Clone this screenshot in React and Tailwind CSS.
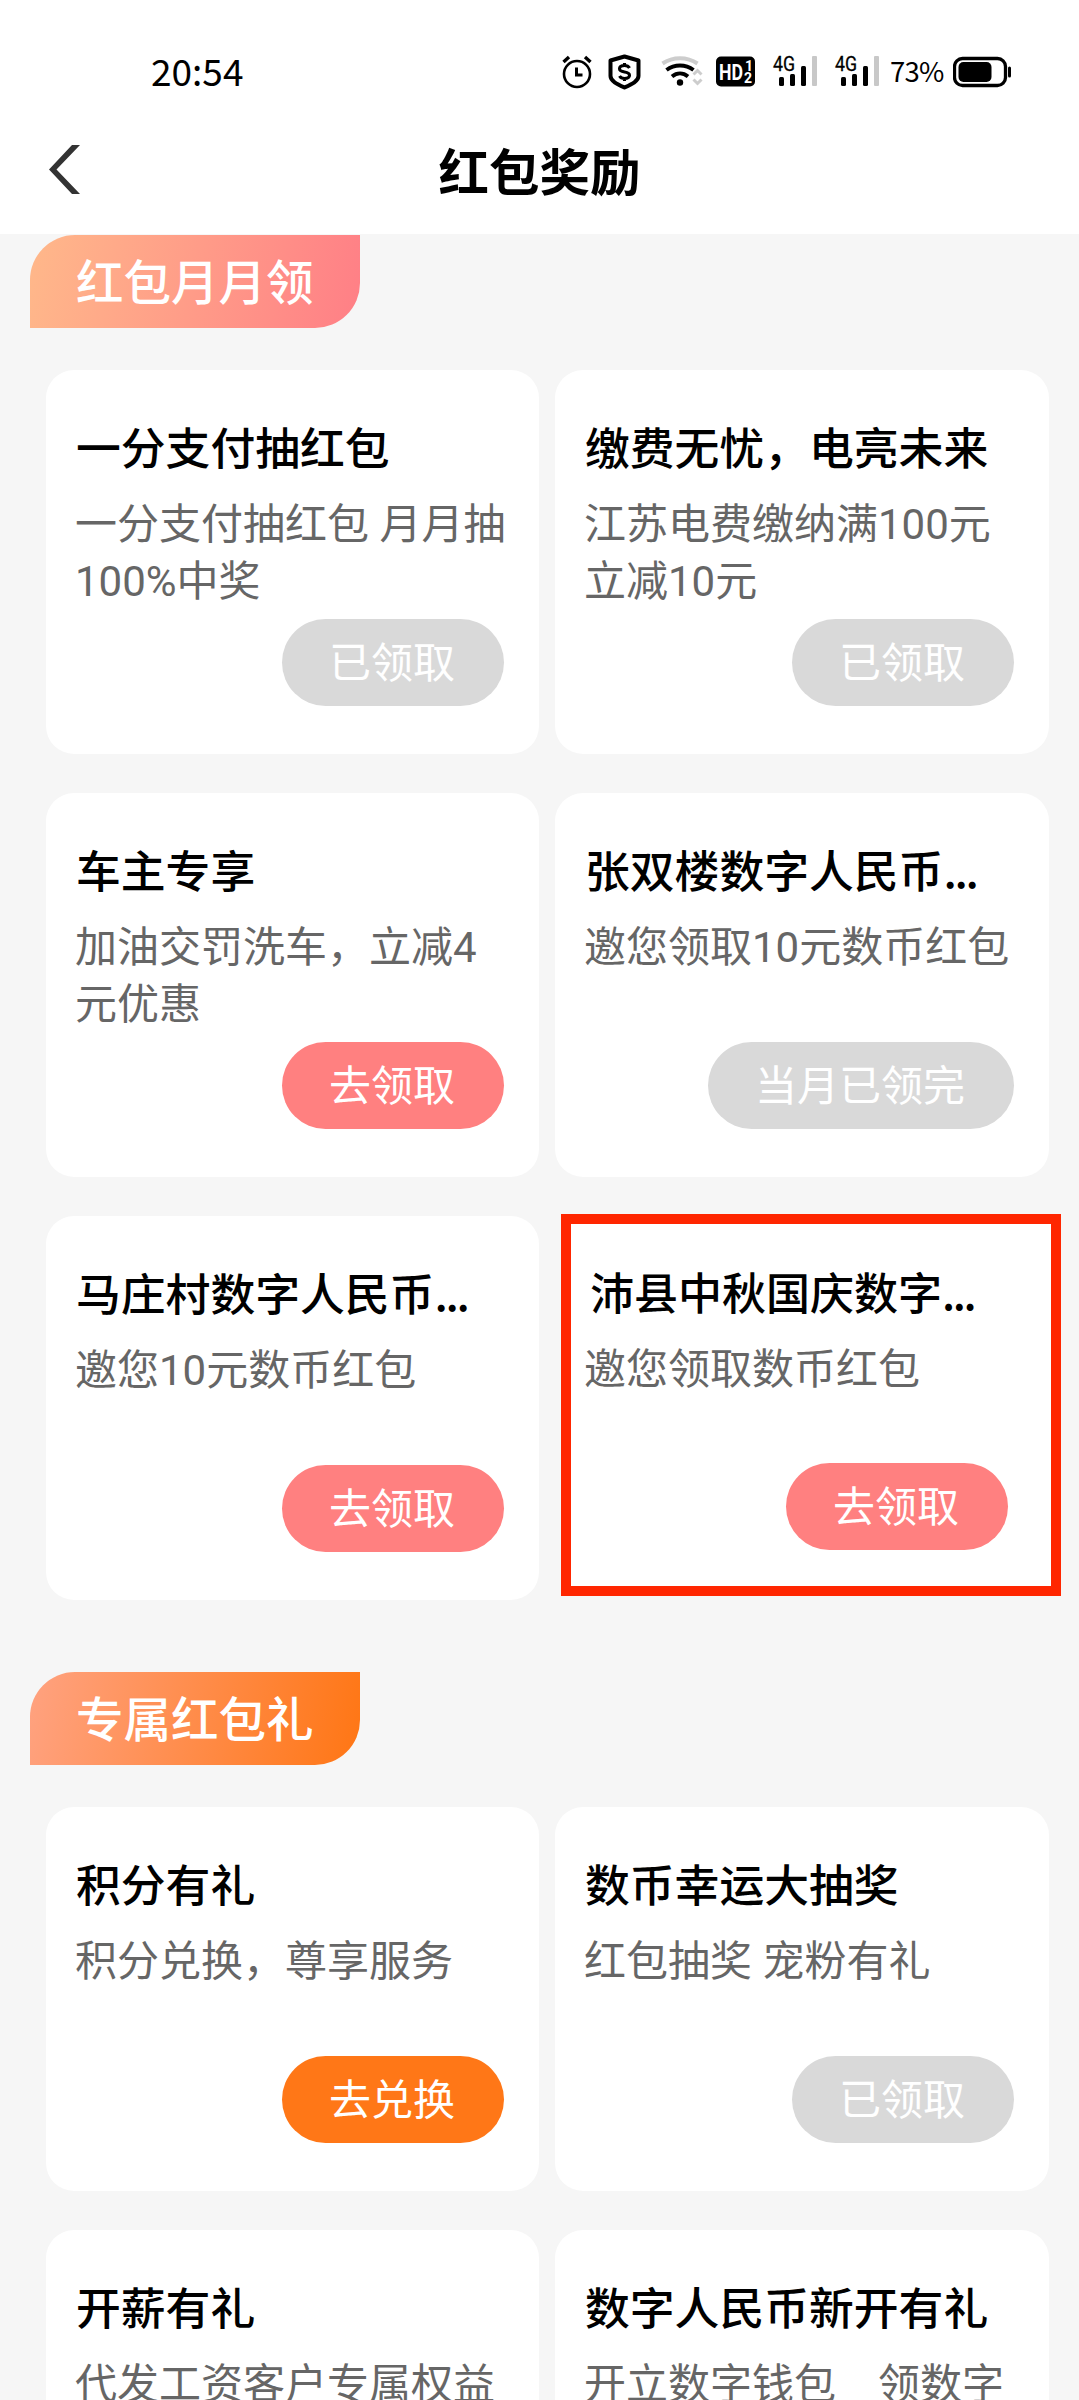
import { Fragment } from "react";
import clsx from "clsx";

const monthly = [
  { title: "一分支付抽红包", desc: ["一分支付抽红包 月月抽", "100%中奖"], btn: "已领取", type: "done" },
  { title: "缴费无忧，电亮未来", desc: ["江苏电费缴纳满100元", "立减10元"], btn: "已领取", type: "done" },
  { title: "车主专享", desc: ["加油交罚洗车，立减4", "元优惠"], btn: "去领取", type: "pink" },
  { title: "张双楼数字人民币", more: true, desc: ["邀您领取10元数币红包"], btn: "当月已领完", type: "done" },
  { title: "马庄村数字人民币", more: true, desc: ["邀您10元数币红包"], btn: "去领取", type: "pink" },
  { title: "沛县中秋国庆数字", more: true, desc: ["邀您领取数币红包"], btn: "去领取", type: "pink", marked: true },
];

const exclusive = [
  { title: "积分有礼", desc: ["积分兑换，尊享服务"], btn: "去兑换", type: "orange" },
  { title: "数币幸运大抽奖", desc: ["红包抽奖 宠粉有礼"], btn: "已领取", type: "done" },
  { title: "开薪有礼", desc: ["代发工资客户专属权益"], btn: "去领取", type: "orange" },
  { title: "数字人民币新开有礼", desc: ["开立数字钱包　领数字"], btn: "去领取", type: "orange" },
];

const btnStyles = {
  done: "bg-[#d9d9d9]",
  pink: "bg-[#ff8080]",
  orange: "bg-[#ff7717]",
};

function Signal() {
  return (
    <svg className="overflow-visible" width="46" height="34" viewBox="0 0 46 34">
      <text x="0" y="15.5" fontSize="20" textLength="22" lengthAdjust="spacingAndGlyphs" fontFamily="Roboto" stroke="#000" strokeWidth="0.3">4G</text>
      <rect x="6" y="22" width="5" height="9" rx="1.5" />
      <rect x="17" y="19" width="5" height="12" rx="1.5" />
      <rect x="28" y="11" width="5" height="20" rx="1.5" />
      <rect x="39" y="1" width="5" height="30" rx="1" fill="#c8c8c8" />
    </svg>
  );
}

function StatusBar() {
  return (
    <div className="flex h-[110px] items-center pl-[151px] pt-[36px] pb-[2px] text-black">
      <span className="w-[410px] pb-[4px] text-[37px] leading-[68px]">20:54</span>
      {/* alarm */}
      <svg width="31" height="36" viewBox="0 0 31 36" fill="none" stroke="#000" strokeWidth="2.6">
        <circle cx="16" cy="20" r="13" />
        <path d="M15.5 13.500v7.500h6" strokeWidth="3" />
        <path d="M2.500 8l5.500-5M29.500 8l-5.500-5" strokeWidth="3.400" />
      </svg>
      {/* shield */}
      <svg className="ml-[15px]" width="36" height="36" viewBox="0 0 36 36" fill="none" stroke="#000">
        <path d="M17.500 2.500l14 4v15.500c0 5-6.500 8-14 11.500C10 30 3.500 27 3.500 22V6.500z" strokeWidth="4" strokeLinejoin="round" />
        <path d="M22.500 14c-1-2-3-2.500-5-2.500-3 0-5 1.200-5 3.300s2 2.700 5 3.200 5 1.200 5 3.300-2 3.200-5 3.200c-2.500 0-4-.8-5-2.500M17.500 9v2.500M17.500 24.500v2.500" strokeWidth="3.100" />
      </svg>
      {/* wifi */}
      <svg className="ml-[18px]" width="42" height="36" viewBox="0 0 42 36" fill="none" stroke="#000" strokeWidth="4">
        <path d="M1.500 9.500C12 2.500 26 2.500 36.500 9.500" stroke="#cdcdcd" />
        <path d="M5.500 16c8-6 19-6 27 0M11 22.500c5-4 11-4 16 0" />
        <circle cx="19" cy="28.500" r="3.200" fill="#000" stroke="none" />
        <path d="M32.500 20.500l4-4 4 4M32.500 25.500l4 4 4-4" stroke="#cdcdcd" strokeWidth="3" />
      </svg>
      {/* HD */}
      <svg className="ml-[13px]" width="40" height="32" viewBox="0 0 40 32">
        <rect x="0" y="0.500" width="39" height="30" rx="5" />
        <g fill="#fff" fontFamily="Roboto" fontWeight="700">
          <text x="3" y="23.500" fontSize="22" textLength="24" lengthAdjust="spacingAndGlyphs">HD</text>
          <text x="29" y="14.500" fontSize="14">1</text>
          <text x="28" y="26.500" fontSize="14">2</text>
        </g>
      </svg>
      <div className="ml-[17px] flex gap-[16px]">
        <Signal />
        <Signal />
      </div>
      <span className="ml-[9px] w-[63px] pb-[3px] text-[27.500px] tracking-[-0.800px]">73%</span>
      <svg width="60" height="32" viewBox="0 0 60 32">
        <rect x="1.500" y="2.500" width="51" height="27" rx="8" fill="none" stroke="#000" strokeWidth="3.300" />
        <rect x="5.500" y="6" width="33" height="20" rx="5" />
        <rect x="55" y="10.500" width="3" height="11" rx="1.500" />
      </svg>
    </div>
  );
}

function Card({ item }) {
  return (
    <div
      className={clsx(
        "flex flex-col bg-white",
        item.marked
          ? "mt-[-2px] mr-[-12px] ml-[6px] h-[382px] w-[500px] border-[10px] border-[#ff2600] pt-[34px] pr-[43px] pl-[14px]"
          : "h-[384px] rounded-[28px] pt-[43px] pr-[35px] pl-[30px]"
      )}
    >
      <h3
        className={clsx(
          "h-[66px] whitespace-nowrap font-medium leading-[66px] text-black",
          item.marked ? "pl-[5px] text-[44px]" : "text-[44.800px]"
        )}
      >
        {item.title}
        {item.more && <span className="tracking-[-2.300px]">...</span>}
      </h3>
      <p
        className="-ml-px mt-[17px] h-[114px] whitespace-nowrap font-[Roboto,'Noto_Sans_CJK_SC',sans-serif] text-[42px] leading-[57px] text-[#666]"
      >
        {item.desc.map((line, i) => (
          <Fragment key={i}>
            {i > 0 && <br />}
            {line}
          </Fragment>
        ))}
      </p>
      <button
        className={clsx(
          "h-[87px] self-end rounded-full pr-[49px] pb-[6px] pl-[47px] text-[42px] leading-[81px] text-white",
          item.marked ? "mt-[8px]" : "mt-[9px]",
          btnStyles[item.type]
        )}
      >
        {item.btn}
      </button>
    </div>
  );
}

function Section({ title, badge, items }) {
  return (
    <section>
      <div
        className={clsx(
          "ml-[30px] h-[93px] w-[330px] rounded-tl-[45px] rounded-br-[45px] pl-[46px] text-[47.500px] font-medium leading-[89px] text-white",
          badge
        )}
      >
        {title}
      </div>
      <div className="mt-[42px] grid grid-cols-[493px_494px] gap-x-[16px] gap-y-[39px] pl-[46px]">
        {items.map((item) => (
          <Card key={item.title} item={item} />
        ))}
      </div>
    </section>
  );
}

export default function App() {
  return (
    <div className="h-[2400px] w-[1079px] overflow-hidden bg-[#f6f6f6] font-['Noto_Sans_CJK_SC',sans-serif]">
      <header className="h-[234px] bg-white">
        <StatusBar />
        <div className="relative flex h-[124px] items-center justify-center">
          <svg className="absolute top-[35px] left-[48px]" width="34" height="50" viewBox="0 0 34 50">
            <path d="M24 0h8L8.500 24.500 32 49h-8L1 24.500z" fill="#333" />
          </svg>
          <h1 className="pb-[6px] text-[50.500px] font-bold leading-[118px] text-black">红包奖励</h1>
        </div>
      </header>
      <main className="pt-px">
        <Section title="红包月月领" badge="bg-linear-[100deg,#ffb88a,#ff7f86]" items={monthly} />
        <div className="h-[72px]" />
        <Section title="专属红包礼" badge="bg-linear-[100deg,#ffa280,#ff7614]" items={exclusive} />
      </main>
    </div>
  );
}
